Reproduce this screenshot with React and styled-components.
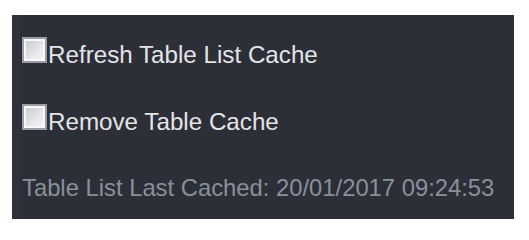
import React from "react";
import styled, { createGlobalStyle } from "styled-components";

const Global = createGlobalStyle`
  html, body { margin: 0; padding: 0; background: #ffffff; }
  body { font-family: "Liberation Sans", Arial, sans-serif; }
`;

const Page = styled.div`
  padding: 15px 0 0 12px;
`;

const Panel = styled.div`
  box-sizing: border-box;
  width: 502px;
  height: 204px;
  background: #2c2f38;
  border-left: 8px solid #30333c;
  padding: 22px 0 0 2px;
  display: flex;
  flex-direction: column;
`;

const Row = styled.label`
  display: flex;
  align-items: flex-start;
  margin-bottom: ${(p) => p.$gap}px;
  cursor: pointer;
`;

const Box = styled.input.attrs({ type: "checkbox" })`
  appearance: none;
  -webkit-appearance: none;
  box-sizing: border-box;
  margin: 0 1px 0 0;
  width: 25px;
  height: 26px;
  border: 2px solid #9c9da2;
  box-shadow: inset 0 0 0 2px #f7f7f8;
  background: linear-gradient(135deg, #c4c7cf 0%, #e4e5ea 55%, #f6f6f6 100%);
  flex: none;
`;

const Label = styled.span`
  padding-top: 5px;
  font-size: 24.2px;
  line-height: 26px;
  color: #e4e4e6;
  white-space: nowrap;
`;

const Info = styled.div`
  font-size: 23.8px;
  line-height: 26px;
  color: #8b8f98;
  white-space: nowrap;
`;

export default function App() {
  return (
    <>
      <Global />
      <Page>
        <Panel>
          <Row $gap={36}>
            <Box />
            <Label>Refresh Table List Cache</Label>
          </Row>
          <Row $gap={40}>
            <Box />
            <Label>Remove Table Cache</Label>
          </Row>
          <Info>Table List Last Cached: 20/01/2017 09:24:53</Info>
        </Panel>
      </Page>
    </>
  );
}
